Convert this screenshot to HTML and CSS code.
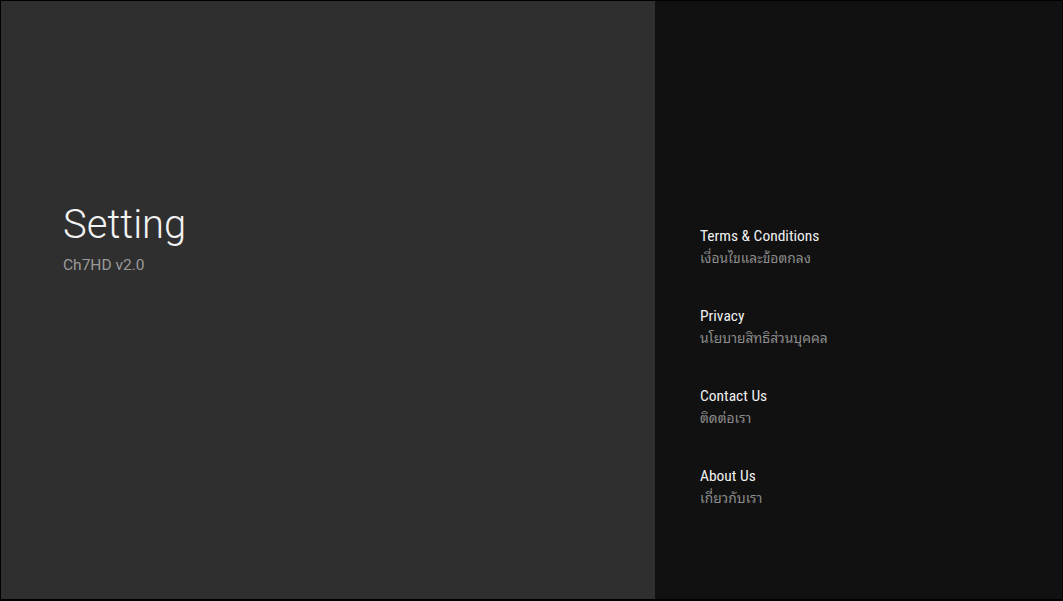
FILE: index.html
```html
<!DOCTYPE html>
<html lang="th">
<head>
<meta charset="utf-8">
<title>Setting</title>
<link rel="stylesheet" href="styles.css">
</head>
<body>
<div class="frame">
  <section class="intro">
    <h1 class="title">Setting</h1>
    <p class="version">Ch7HD v2.0</p>
  </section>
  <nav class="menu">
    <div class="item">
      <div class="item-title">Terms &amp; Conditions</div>
      <div class="item-sub">เงื่อนไขและข้อตกลง</div>
    </div>
    <div class="item">
      <div class="item-title">Privacy</div>
      <div class="item-sub">นโยบายสิทธิส่วนบุคคล</div>
    </div>
    <div class="item">
      <div class="item-title">Contact Us</div>
      <div class="item-sub">ติดต่อเรา</div>
    </div>
    <div class="item">
      <div class="item-title">About Us</div>
      <div class="item-sub">เกี่ยวกับเรา</div>
    </div>
  </nav>
</div>
</body>
</html>
```
FILE: styles.css
```css
html, body {
  margin: 0;
  padding: 0;
  background: #000;
}
body {
  width: 1063px;
  height: 601px;
  overflow: hidden;
  font-family: Roboto, "Noto Sans", sans-serif;
}
.frame {
  box-sizing: border-box;
  width: 1063px;
  height: 601px;
  padding: 1px 1px 2px 1px;
  display: flex;
}
.intro {
  width: 654px;
  flex: none;
  background: #2f2f2f;
  box-sizing: border-box;
  padding: 200px 0 0 62px;
}
.title {
  margin: 0;
  font-weight: 300;
  font-size: 40px;
  line-height: 48px;
  color: #f2f2f2;
}
.version {
  margin: 6px 0 0;
  font-size: 15.5px;
  line-height: 20px;
  color: #9a9a9a;
}
.menu {
  flex: 1;
  background: #111;
  box-sizing: border-box;
  padding: 224px 0 0 45px;
  display: flex;
  flex-direction: column;
  gap: 38px;
}
.item {
  height: 42px;
}
.item-title {
  font-family: "Roboto Condensed", "Liberation Sans Narrow", Roboto, sans-serif;
  font-size: 15.5px;
  line-height: 22px;
  color: #f0f0f0;
}
.item-sub {
  margin-top: 2px;
  font-family: "Roboto Condensed", "Noto Sans Thai Looped", "Noto Sans Thai", sans-serif;
  font-size: 13.8px;
  line-height: 18px;
  color: #8c8c8c;
}
```
